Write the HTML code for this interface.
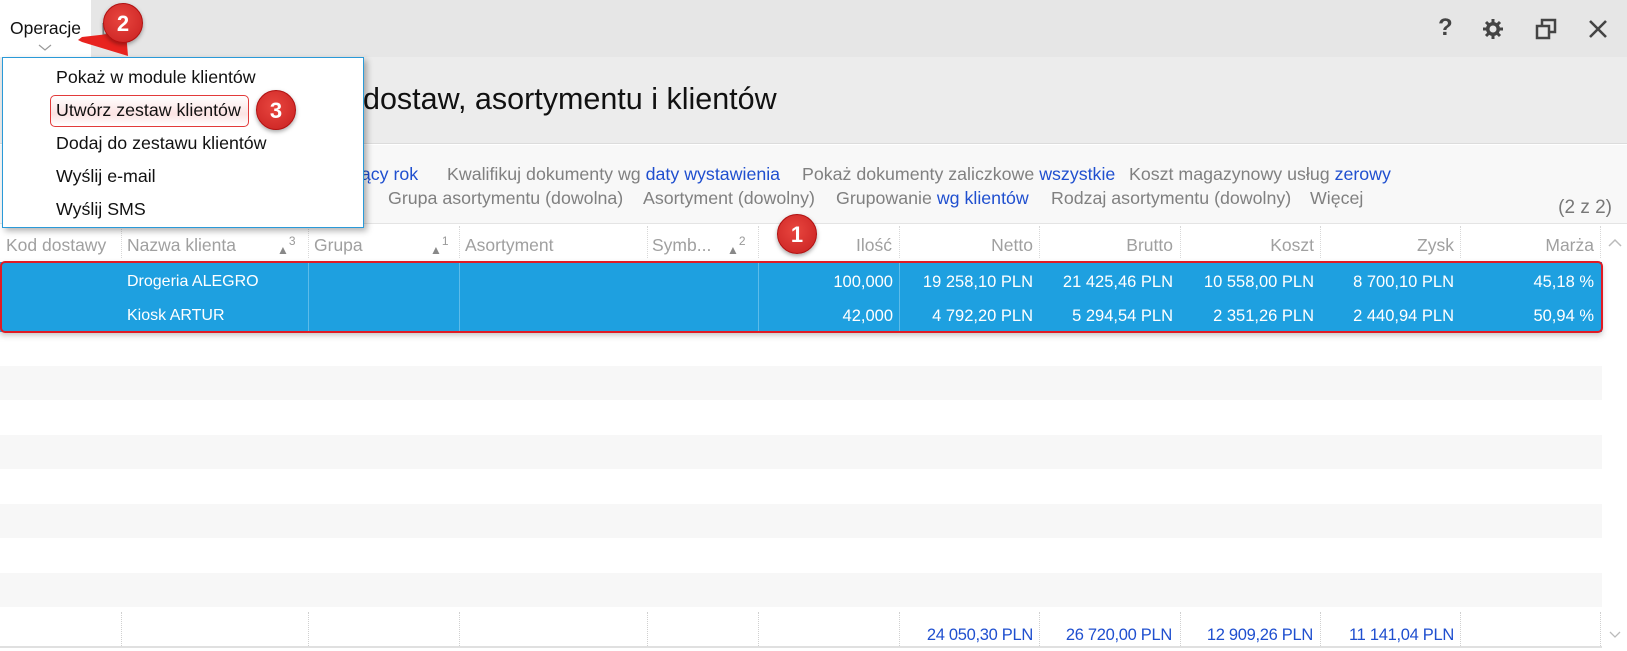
<!DOCTYPE html>
<html><head><meta charset="utf-8"><style>
*{margin:0;padding:0;box-sizing:border-box}
body{width:1627px;height:651px;overflow:hidden;background:#fff;font-family:"Liberation Sans",sans-serif;position:relative}
.a{position:absolute;white-space:nowrap}
.g{color:#808080}.b{color:#1f4fcf}
.fl{font-size:17.8px;line-height:20px}
.hd{font-size:17.5px;color:#a0a0a0;line-height:20px;top:235px}
.r{font-size:16.5px;color:#fff;line-height:20px;text-align:right}
.ft{font-size:16.5px;color:#1f4fcf;line-height:20px;text-align:right;top:625px;letter-spacing:-0.3px}
.vd{position:absolute;top:226px;height:32px;border-left:1px dotted #d8d8d8}
.bd{position:absolute;top:262px;height:70px;border-left:1px solid #5cbbe9}
.fd{position:absolute;top:612px;height:34px;border-left:1px dotted #d0d0d0}
.circ{position:absolute;width:40px;height:40px;border-radius:50%;background:radial-gradient(circle at 45% 40%,#e8463f,#c82020);color:#fff;font-weight:bold;font-size:22px;text-align:center;line-height:40px;box-shadow:0 2px 4px rgba(0,0,0,.35);border:1px solid #b01010}
.band{position:absolute;left:0;width:1602px;height:34px;background:#f7f7f7}
.ar{font-size:12px;color:#888;top:238px}
.ar sup{font-size:12px;color:#999;position:relative;top:-4px}
</style></head><body>
<div class="a" style="left:0;top:0;width:1627px;height:57px;background:#e6e6e6"></div>
<div class="a" style="left:0;top:0;width:91px;height:57px;background:#fff"></div>
<div class="a" style="left:10px;top:18px;font-size:17.5px;color:#111">Operacje</div>
<div class="a" style="left:101px;top:19px;font-size:17.5px;color:#888">Lista</div>
<svg class="a" style="left:38px;top:44px" width="14" height="8"><path d="M1 1 L7 6 L13 1" stroke="#999" fill="none" stroke-width="1.2"/></svg>
<div class="a" style="left:1438px;top:14px;font-size:24px;color:#444;font-weight:bold">?</div>
<svg class="a" style="left:1480px;top:16px" width="26" height="26" viewBox="0 0 26 26"><g stroke="#444" stroke-width="3"><line x1="13" y1="3" x2="13" y2="23"/><line x1="3" y1="13" x2="23" y2="13"/><line x1="6" y1="6" x2="20" y2="20"/><line x1="20" y1="6" x2="6" y2="20"/></g><circle cx="13" cy="13" r="7" fill="#444"/><circle cx="13" cy="13" r="3.5" fill="#e6e6e6"/></svg>
<svg class="a" style="left:1534px;top:17px" width="24" height="24" viewBox="0 0 24 24"><rect x="8" y="3" width="13" height="12" fill="none" stroke="#444" stroke-width="2.5"/><rect x="3" y="9" width="12" height="12" fill="#e6e6e6" stroke="#444" stroke-width="2.5"/></svg>
<svg class="a" style="left:1588px;top:19px" width="20" height="20"><path d="M2 2L18 18M18 2L2 18" stroke="#444" stroke-width="2.6"/></svg>
<div class="a" style="left:0;top:57px;width:1627px;height:87px;background:#ececec;border-bottom:1px solid #dcdcdc"></div>
<div class="a" style="left:363px;top:82px;font-size:30.5px;color:#111">dostaw, asortymentu i klientów</div>
<div class="a" style="left:0;top:145px;width:1627px;height:79px;background:#f8f8f8;border-bottom:1px solid #e4e4e4"></div>
<div class="a fl" style="left:352px;top:164px"><span class="b">żący rok</span></div>
<div class="a fl g" style="left:447px;top:164px">Kwalifikuj dokumenty wg <span class="b">daty wystawienia</span></div>
<div class="a fl g" style="left:802px;top:164px">Pokaż dokumenty zaliczkowe <span class="b">wszystkie</span></div>
<div class="a fl g" style="left:1129px;top:164px">Koszt magazynowy usług <span class="b">zerowy</span></div>
<div class="a fl g" style="left:356px;top:188px">)</div>
<div class="a fl g" style="left:388px;top:188px">Grupa asortymentu (dowolna)</div>
<div class="a fl g" style="left:643px;top:188px">Asortyment (dowolny)</div>
<div class="a fl g" style="left:836px;top:188px">Grupowanie <span class="b">wg klientów</span></div>
<div class="a fl g" style="left:1051px;top:188px">Rodzaj asortymentu (dowolny)</div>
<div class="a fl g" style="left:1310px;top:188px">Więcej</div>
<div class="a g" style="left:1530px;top:197px;font-size:19px;width:82px;text-align:right;color:#777">(2 z 2)</div>
<div class="vd" style="left:121px"></div><div class="vd" style="left:308px"></div><div class="vd" style="left:459px"></div><div class="vd" style="left:647px"></div><div class="vd" style="left:758px"></div><div class="vd" style="left:899px"></div><div class="vd" style="left:1039px"></div><div class="vd" style="left:1180px"></div><div class="vd" style="left:1320px"></div><div class="vd" style="left:1460px"></div><div class="vd" style="left:1600px"></div>
<div class="a hd" style="left:6px">Kod dostawy</div>
<div class="a hd" style="left:127px">Nazwa klienta</div>
<div class="a ar" style="left:277px">▲<sup>3</sup></div>
<div class="a hd" style="left:314px">Grupa</div>
<div class="a ar" style="left:430px">▲<sup>1</sup></div>
<div class="a hd" style="left:465px">Asortyment</div>
<div class="a hd" style="left:652px">Symb...</div>
<div class="a ar" style="left:727px">▲<sup>2</sup></div>
<div class="a hd" style="left:758px;width:134px;text-align:right">Ilość</div>
<div class="a hd" style="left:899px;width:134px;text-align:right">Netto</div>
<div class="a hd" style="left:1039px;width:134px;text-align:right">Brutto</div>
<div class="a hd" style="left:1180px;width:134px;text-align:right">Koszt</div>
<div class="a hd" style="left:1320px;width:134px;text-align:right">Zysk</div>
<div class="a hd" style="left:1460px;width:134px;text-align:right">Marża</div>
<svg class="a" style="left:1607px;top:238px" width="16" height="10"><path d="M2 8L8 2L14 8" stroke="#bbb" fill="none" stroke-width="1.5"/></svg>
<div class="a" style="left:0;top:262px;width:1602px;height:70px;background:#1ea0e0;box-shadow:0 3px 6px rgba(0,0,0,.25)"></div>
<div class="bd" style="left:308px"></div><div class="bd" style="left:459px"></div><div class="bd" style="left:758px"></div><div class="bd" style="left:899px"></div>
<div class="a r" style="left:127px;top:272px;text-align:left;font-size:16px">Drogeria ALEGRO</div>
<div class="a r" style="left:127px;top:306px;text-align:left;font-size:16px">Kiosk ARTUR</div>
<div class="a r" style="left:758px;width:135px;top:272px">100,000</div>
<div class="a r" style="left:899px;width:134px;top:272px">19 258,10 PLN</div>
<div class="a r" style="left:1039px;width:134px;top:272px">21 425,46 PLN</div>
<div class="a r" style="left:1180px;width:134px;top:272px">10 558,00 PLN</div>
<div class="a r" style="left:1320px;width:134px;top:272px">8 700,10 PLN</div>
<div class="a r" style="left:1460px;width:134px;top:272px">45,18 %</div>
<div class="a r" style="left:758px;width:135px;top:306px">42,000</div>
<div class="a r" style="left:899px;width:134px;top:306px">4 792,20 PLN</div>
<div class="a r" style="left:1039px;width:134px;top:306px">5 294,54 PLN</div>
<div class="a r" style="left:1180px;width:134px;top:306px">2 351,26 PLN</div>
<div class="a r" style="left:1320px;width:134px;top:306px">2 440,94 PLN</div>
<div class="a r" style="left:1460px;width:134px;top:306px">50,94 %</div>
<div class="a" style="left:0;top:261px;width:1603px;height:72px;border:2px solid #e01b24;border-radius:5px"></div>
<div class="band" style="top:366px"></div><div class="band" style="top:435px"></div><div class="band" style="top:504px"></div><div class="band" style="top:573px"></div>
<div class="fd" style="left:121px"></div><div class="fd" style="left:308px"></div><div class="fd" style="left:459px"></div><div class="fd" style="left:647px"></div><div class="fd" style="left:758px"></div><div class="fd" style="left:899px"></div><div class="fd" style="left:1039px"></div><div class="fd" style="left:1180px"></div><div class="fd" style="left:1320px"></div><div class="fd" style="left:1460px"></div><div class="fd" style="left:1600px"></div>
<div class="a ft" style="left:899px;width:134px">24 050,30 PLN</div>
<div class="a ft" style="left:1039px;width:133px">26 720,00 PLN</div>
<div class="a ft" style="left:1180px;width:133px">12 909,26 PLN</div>
<div class="a ft" style="left:1320px;width:134px">11 141,04 PLN</div>
<div class="a" style="left:0;top:646px;width:1602px;height:2px;background:#e0e0e0"></div>
<svg class="a" style="left:1608px;top:630px" width="14" height="9"><path d="M2 2L7 7L12 2" stroke="#bbb" fill="none" stroke-width="1.3"/></svg>
<div class="a" style="left:2px;top:57px;width:362px;height:171px;background:#fff;border:1px solid #2a9ad8;box-shadow:3px 3px 6px rgba(0,0,0,.3)"></div>
<div class="a" style="left:50px;top:95px;width:199px;height:32px;border:1.5px solid #e23a3a;border-radius:5px;background:linear-gradient(#fff,#fbe3e3 60%,#fff)"></div>
<div class="a" style="left:56px;top:67px;font-size:17.8px;color:#111">Pokaż w module klientów</div>
<div class="a" style="left:56px;top:100px;font-size:17.8px;color:#111">Utwórz zestaw klientów</div>
<div class="a" style="left:56px;top:133px;font-size:17.8px;color:#111">Dodaj do zestawu klientów</div>
<div class="a" style="left:56px;top:166px;font-size:17.8px;color:#111">Wyślij e-mail</div>
<div class="a" style="left:56px;top:199px;font-size:17.8px;color:#111">Wyślij SMS</div>
<svg class="a" style="left:70px;top:28px" width="70" height="36"><path d="M56 4 L12 9 L8 12 L12 14 L58 28 Z" fill="#e8231f"/></svg>
<div class="circ" style="left:103px;top:3px">2</div>
<div class="circ" style="left:256px;top:90px">3</div>
<div class="circ" style="left:777px;top:214px">1</div>
</body></html>
